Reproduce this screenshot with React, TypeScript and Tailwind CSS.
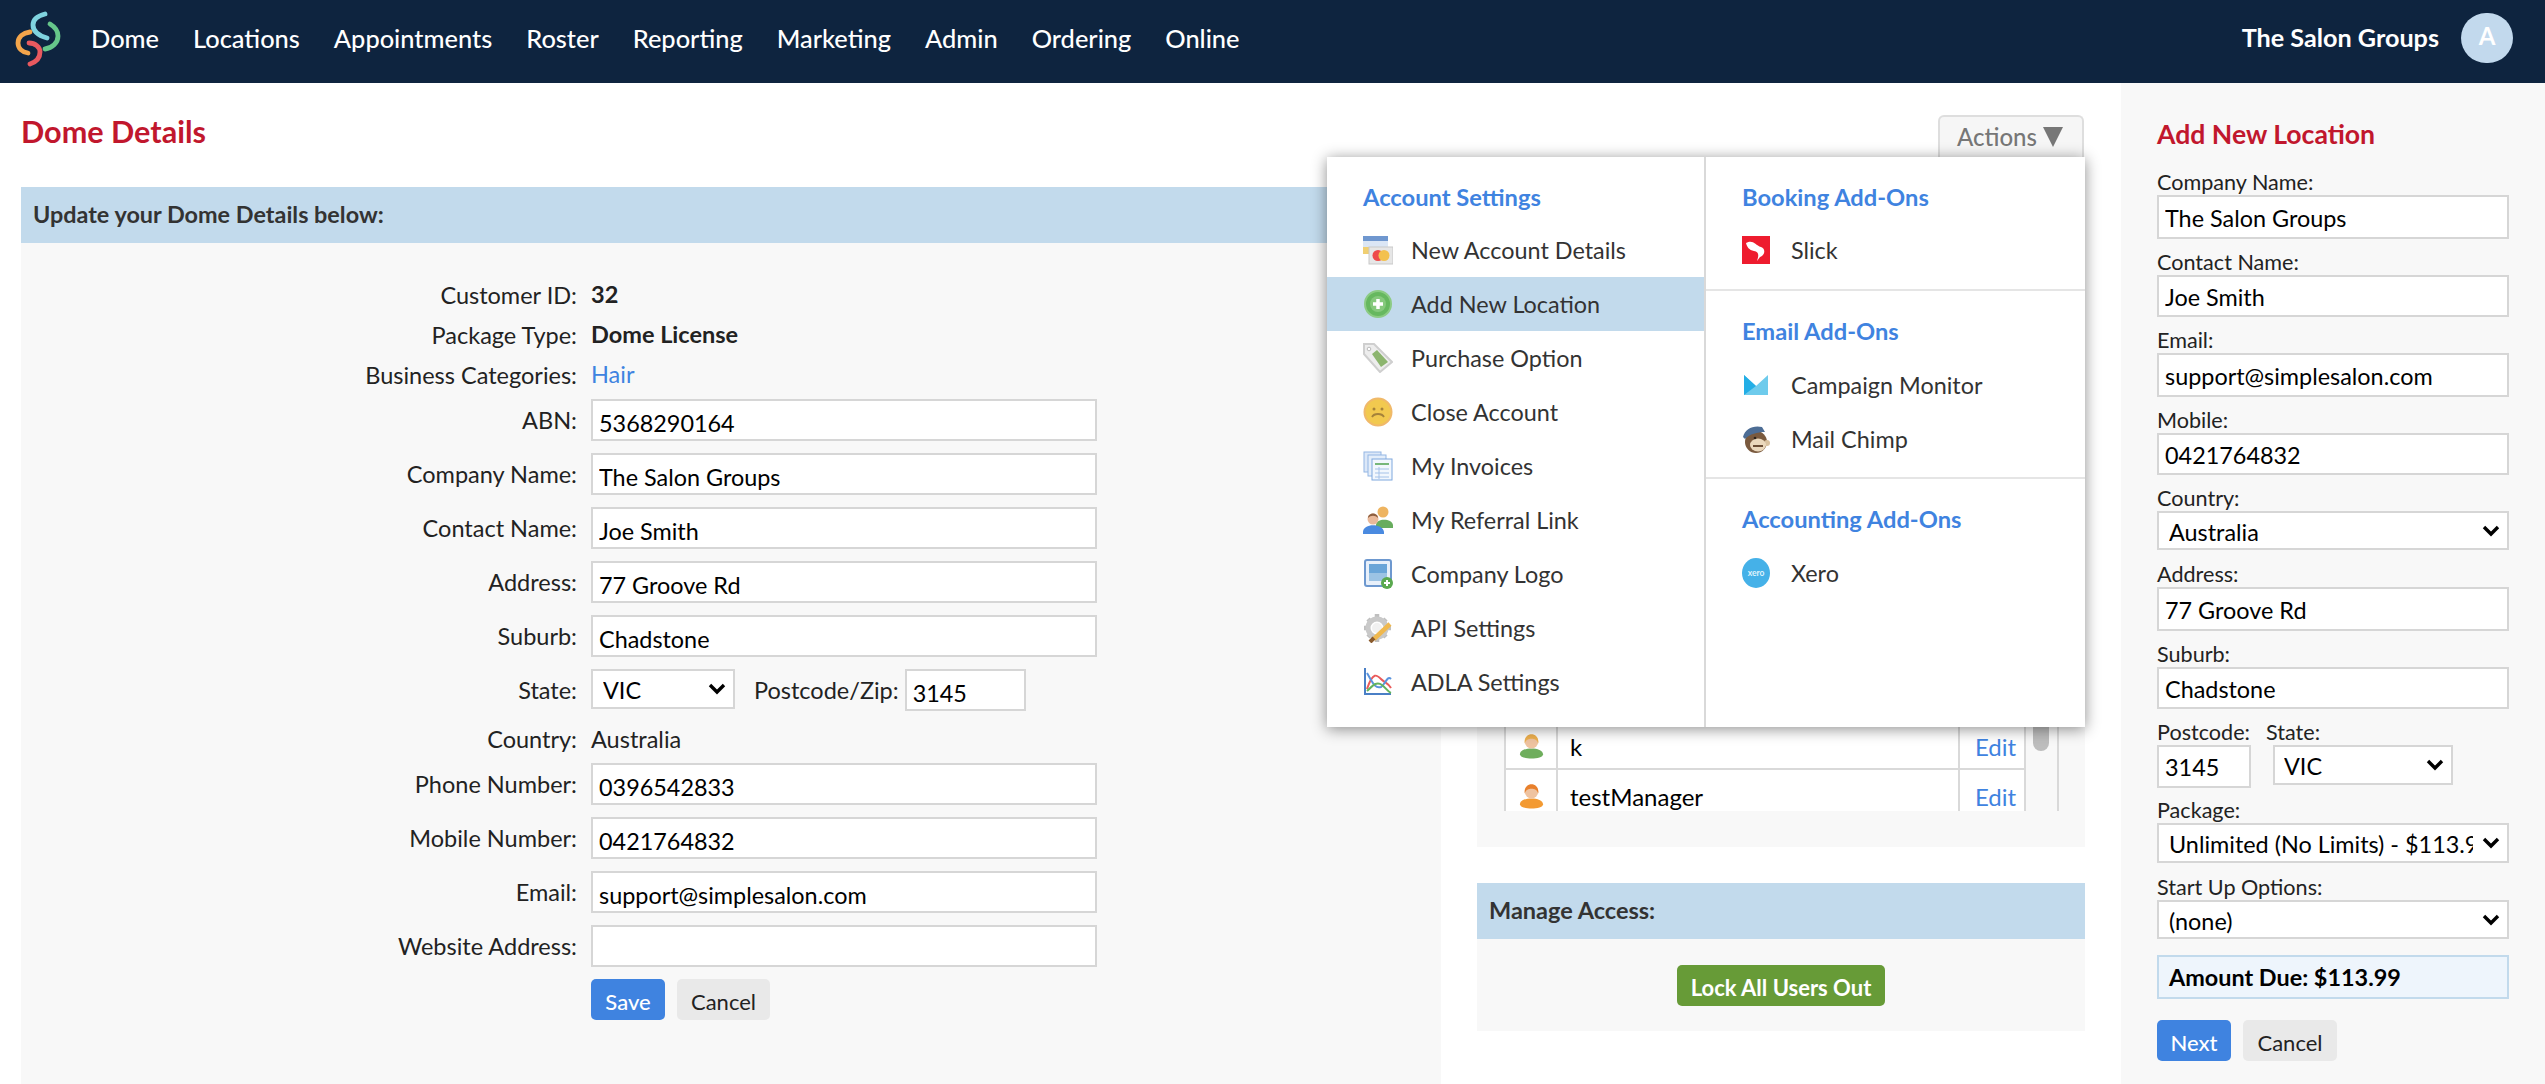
import type { ReactNode } from "react";

const navItems = ["Dome", "Locations", "Appointments", "Roster", "Reporting", "Marketing", "Admin", "Ordering", "Online"];

function Logo() {
  return (
    <svg viewBox="0 0 50 58" className="w-[50px] h-[58px] shrink-0" fill="none" strokeLinecap="round" strokeWidth="4.8">
      <path d="M31 5 C23 7 19 11 19 16 C19 23 26 27 33 29" stroke="#7fd3df" />
      <path d="M36 15 C41 18 44 22 44 27 C44 34 38 39 31 40" stroke="#66c68a" />
      <path d="M16 23 C9 24 4 28 4 34 C4 39 8 43 14 44" stroke="#f3a54b" />
      <path d="M15 34 C21 34 26 38 26 43 C26 49 22 53 16 55" stroke="#e8595f" />
    </svg>
  );
}

function CardIcon() {
  return (
    <svg viewBox="0 0 30 30" className="w-[30px] h-[30px]">
      <rect x="0" y="1" width="25" height="18" fill="#dbe6f5" />
      <rect x="0" y="1" width="25" height="5" fill="#6f97cf" />
      <rect x="0" y="12" width="6" height="7" fill="#f0cf72" />
      <rect x="6" y="12" width="24" height="17" fill="#e6e6e6" stroke="#c9c9c9" />
      <circle cx="15" cy="20.5" r="5.5" fill="#ee4a4a" />
      <circle cx="21" cy="20.5" r="5.5" fill="#f3c14f" />
    </svg>
  );
}

function AddIcon() {
  return (
    <svg viewBox="0 0 30 30" className="w-[30px] h-[30px]">
      <circle cx="15" cy="15" r="13" fill="#66b85f" stroke="#8ccb84" strokeWidth="2" />
      <circle cx="15" cy="15" r="8" fill="#86c97d" />
      <path d="M15 10 V20 M10 15 H20" stroke="#fff" strokeWidth="3.5" />
    </svg>
  );
}

function TagIcon() {
  return (
    <svg viewBox="0 0 30 30" className="w-[30px] h-[30px]">
      <path d="M1 1 H11 L29 19 L17 29 L1 11 Z" fill="#ededed" stroke="#cfcfcf" strokeWidth="2" />
      <path d="M9 11 L14 7 L25 19 L18 24 Z" fill="#8cb56e" />
      <circle cx="6" cy="6" r="1.8" fill="#fff" stroke="#bbb" />
    </svg>
  );
}

function SadIcon() {
  return (
    <svg viewBox="0 0 30 30" className="w-[30px] h-[30px]" fill="none">
      <circle cx="15" cy="15" r="13.5" fill="#f2c94f" stroke="#f0b96a" strokeWidth="2" />
      <circle cx="11" cy="12" r="1.5" fill="#a5823a" />
      <circle cx="19" cy="12" r="1.5" fill="#a5823a" />
      <path d="M9 20 C11 16 19 16 21 20" stroke="#a5823a" strokeWidth="1.8" />
    </svg>
  );
}

function InvoiceIcon() {
  return (
    <svg viewBox="0 0 30 30" className="w-[30px] h-[30px]">
      <rect x="1" y="1" width="17" height="20" fill="#dce8f8" stroke="#93b6e4" />
      <rect x="5" y="4" width="18" height="21" fill="#e4eefa" stroke="#93b6e4" />
      <rect x="9" y="8" width="20" height="21" fill="#f2f7fd" stroke="#7fa8de" />
      <path d="M12 13 H26" stroke="#77b77a" strokeWidth="2" />
      <path d="M12 18 H26 M12 22 H26 M12 26 H26 M16 16 V28" stroke="#a5c2e8" />
    </svg>
  );
}

function ReferralIcon() {
  return (
    <svg viewBox="0 0 30 30" className="w-[30px] h-[30px]">
      <circle cx="20" cy="7" r="5.5" fill="#eeb460" />
      <path d="M13 20 C13 13 29 13 30 20 V23 H13 Z" fill="#68ad5e" />
      <circle cx="10" cy="14" r="5.5" fill="#e9b99a" />
      <path d="M5 13 C5 7 15 7 15 13 C12 10 8 10 5 13 Z" fill="#8e5f3f" />
      <path d="M0 27 C0 18 20 18 21 27 V29 H0 Z" fill="#4a8ae0" />
    </svg>
  );
}

function LogoIcon() {
  return (
    <svg viewBox="0 0 30 30" className="w-[30px] h-[30px]">
      <rect x="2" y="1" width="26" height="26" rx="2" fill="#e8f0fa" stroke="#6d98cf" strokeWidth="2" />
      <rect x="6" y="5" width="18" height="17" fill="#6aa5d8" />
      <rect x="6" y="14" width="18" height="8" fill="#9cc3e4" />
      <circle cx="24" cy="24" r="6" fill="#5aa94f" />
      <path d="M24 21 V27 M21 24 H27" stroke="#fff" strokeWidth="2" />
    </svg>
  );
}

function GearIcon() {
  return (
    <svg viewBox="0 0 30 30" className="w-[30px] h-[30px]" fill="none">
      <path d="M14 1 V7 M14 23 V29 M1 15 H7 M21 15 H28 M5 6 L9 10 M23 6 L19 10 M5 24 L9 20 M23 24 L19 20" stroke="#bfbfbf" strokeWidth="4.5" />
      <circle cx="14" cy="15" r="9" stroke="#c9c9c9" strokeWidth="5" />
      <circle cx="14" cy="15" r="5" fill="#f1f1f1" />
      <path d="M11 26 L27 11" stroke="#efb84e" strokeWidth="4.5" />
      <path d="M7 29 L11 25" stroke="#8a5a2c" strokeWidth="4" />
    </svg>
  );
}

function ChartIcon() {
  return (
    <svg viewBox="0 0 30 30" className="w-[30px] h-[30px]" fill="none">
      <path d="M2 1 V27 H28" stroke="#4a7fc6" strokeWidth="2" />
      <path d="M4 22 C10 4 14 8 18 12 C22 16 25 16 28 21" stroke="#ea5a5a" strokeWidth="2" />
      <path d="M4 6 C10 16 12 22 18 20 C22 18 24 8 28 12" stroke="#5a93dd" strokeWidth="2" />
      <path d="M4 24 C10 18 14 14 19 18 C23 21 25 25 28 26" stroke="#63b35e" strokeWidth="2" />
    </svg>
  );
}

function SlickIcon() {
  return (
    <svg viewBox="0 0 28 28" className="w-[28px] h-[28px]" fill="none">
      <rect width="28" height="28" fill="#ee1c2e" />
      <path d="M4 7 C11 3 13 9 19 11 C24 13 23 19 18 21 L15 25 C17 19 17 16 12 15 C7 14 5 11 4 7 Z" fill="#fff" />
    </svg>
  );
}

function CampaignIcon() {
  return (
    <svg viewBox="0 0 28 28" className="w-[28px] h-[28px]">
      <path d="M2 4 L14 15 L26 4 V24 H2 Z" fill="#6ecbec" />
      <path d="M2 4 L14 15 L2 24 Z" fill="#23aee6" />
    </svg>
  );
}

function ChimpIcon() {
  return (
    <svg viewBox="0 0 28 28" className="w-[28px] h-[28px]">
      <ellipse cx="14" cy="17" rx="11" ry="11" fill="#7a5a3e" />
      <circle cx="25" cy="18" r="3" fill="#d9c2a0" />
      <ellipse cx="16" cy="20" rx="8" ry="6.5" fill="#ead8bc" />
      <circle cx="13" cy="13" r="1.3" fill="#2b2118" />
      <path d="M1 12 C3 4 11 0 20 2 L23 7 C15 7 8 9 3 14 Z" fill="#4d6d95" />
      <path d="M11 21 H21" stroke="#6a4d35" strokeWidth="2" />
    </svg>
  );
}

function XeroIcon() {
  return (
    <svg viewBox="0 0 28 30" className="w-[28px] h-[30px]">
      <ellipse cx="14" cy="15" rx="14" ry="15" fill="#45b1e8" />
      <text x="14" y="18" textAnchor="middle" fontSize="8.5" fill="#dff3fc" fontFamily="Lato, sans-serif" fontWeight="700">xero</text>
    </svg>
  );
}

function PersonIcon({ hair, body }: { hair: string; body: string }) {
  return (
    <svg viewBox="0 0 28 26" className="w-[27px] h-[25px]">
      <path d="M2 21 C2 13 26 13 26 21 C26 27 2 27 2 21 Z" fill={body} />
      <circle cx="14" cy="8" r="7" fill="#efc3a0" />
      <path d="M7 10 C5 -3 23 -3 21 10 C20 6 17 5 14 5 C11 5 8 6 7 10 Z" fill={hair} />
    </svg>
  );
}

function MenuRow({ icon, label, active }: { icon: ReactNode; label: string; active?: boolean }) {
  return (
    <div className={`flex h-[54px] items-center pl-[36px] text-[23.4px] text-[#333] ${active ? "bg-[#c2daec]" : ""}`}>
      {icon}
      <span className="ml-[18px] pt-[2px]">{label}</span>
    </div>
  );
}

function AddonRow({ icon, label }: { icon: ReactNode; label: string }) {
  return (
    <div className="flex h-[54px] items-center pl-[36px] text-[23.4px] text-[#333]">
      {icon}
      <span className="ml-[21px] pt-[2px]">{label}</span>
    </div>
  );
}

function MenuHeading({ children, className }: { children: ReactNode; className: string }) {
  return <div className={`flex items-center text-[23.7px] font-bold text-[#3f83e0] ${className}`}>{children}</div>;
}

function ActionsMenu() {
  return (
    <div className="absolute left-[-150px] top-[74px] z-10 flex h-[570px] w-[758px] bg-white shadow-[0_2px_14px_rgba(0,0,0,0.45)]">
      <div className="w-[379px] shrink-0 border-r-2 border-[#d9d9d9]">
        <MenuHeading className="h-[66px] pl-[36px] pt-[15px]">Account Settings</MenuHeading>
        <MenuRow icon={<CardIcon />} label="New Account Details" />
        <MenuRow icon={<AddIcon />} label="Add New Location" active />
        <MenuRow icon={<TagIcon />} label="Purchase Option" />
        <MenuRow icon={<SadIcon />} label="Close Account" />
        <MenuRow icon={<InvoiceIcon />} label="My Invoices" />
        <MenuRow icon={<ReferralIcon />} label="My Referral Link" />
        <MenuRow icon={<LogoIcon />} label="Company Logo" />
        <MenuRow icon={<GearIcon />} label="API Settings" />
        <MenuRow icon={<ChartIcon />} label="ADLA Settings" />
      </div>
      <div className="flex-1">
        <MenuHeading className="h-[66px] pl-[36px] pt-[15px]">Booking Add-Ons</MenuHeading>
        <AddonRow icon={<SlickIcon />} label="Slick" />
        <div className="mt-[12px] border-t-2 border-[#e5e5e5]" />
        <MenuHeading className="h-[67px] pl-[36px] pt-[14px]">Email Add-Ons</MenuHeading>
        <AddonRow icon={<CampaignIcon />} label="Campaign Monitor" />
        <AddonRow icon={<ChimpIcon />} label="Mail Chimp" />
        <div className="mt-[11px] border-t-2 border-[#e5e5e5]" />
        <MenuHeading className="h-[67px] pl-[36px] pt-[14px]">Accounting Add-Ons</MenuHeading>
        <AddonRow icon={<XeroIcon />} label="Xero" />
      </div>
    </div>
  );
}

function Chevron({ className }: { className: string }) {
  return (
    <svg viewBox="0 0 18 12" fill="none" className={`pointer-events-none absolute h-[12px] w-[18px] ${className}`}>
      <path d="M2 2 L9 9 L16 2" stroke="#000" strokeWidth="3.4" />
    </svg>
  );
}

function TextBox({ value, className }: { value: string; className: string }) {
  return (
    <input
      readOnly
      value={value}
      className={`border-2 border-[#d6d6d6] bg-white px-[6px] text-[23.4px] text-black outline-none ${className}`}
    />
  );
}

function SelectBox({ value, className, pad }: { value: string; className: string; pad: string }) {
  return (
    <div className={`relative ${className}`}>
      <select
        value={value}
        onChange={() => undefined}
        className={`h-full w-full appearance-none border-2 border-[#d6d6d6] bg-white pr-[34px] pt-[2px] text-[23.4px] text-black outline-none ${pad}`}
      >
        <option>{value}</option>
      </select>
      <Chevron className="right-[9px] top-1/2 -translate-y-1/2" />
    </div>
  );
}

function Button({ children, className }: { children: ReactNode; className: string }) {
  return (
    <button type="button" className={`flex h-[41px] items-center justify-center rounded-[5px] pt-[3px] text-[22px] ${className}`}>
      {children}
    </button>
  );
}

function FormRow({ label, className, children }: { label: string; className: string; children: ReactNode }) {
  return (
    <div className={`flex items-center ${className}`}>
      <div className="w-[556px] shrink-0 pt-[2px] text-right">{label}</div>
      <div className="ml-[14px] flex items-center">{children}</div>
    </div>
  );
}

function DomeDetails() {
  const rowBox = "h-[42px] w-[506px] pt-[5px]";
  return (
    <div className="ml-[21px] flex w-[1420px] shrink-0 flex-col">
      <h1 className="flex h-[104px] items-center pb-[6px] text-[30.6px] font-bold text-[#c1172d]">Dome Details</h1>
      <div className="flex h-[56px] items-center bg-[#c2daec] pl-[12px] text-[23.4px] font-bold text-[#333]">
        Update your Dome Details below:
      </div>
      <div className="flex-1 bg-[#f8f8f8] pt-[32px] text-[23.5px] text-[#222]">
        <FormRow label="Customer ID:" className="h-[40px]"><b>32</b></FormRow>
        <FormRow label="Package Type:" className="h-[40px]"><b>Dome License</b></FormRow>
        <FormRow label="Business Categories:" className="h-[40px]"><span className="text-[#3f83e0]">Hair</span></FormRow>
        <FormRow label="ABN:" className="mt-[4px] h-[42px]"><TextBox value="5368290164" className={rowBox} /></FormRow>
        <FormRow label="Company Name:" className="mt-[12px] h-[42px]"><TextBox value="The Salon Groups" className={rowBox} /></FormRow>
        <FormRow label="Contact Name:" className="mt-[12px] h-[42px]"><TextBox value="Joe Smith" className={rowBox} /></FormRow>
        <FormRow label="Address:" className="mt-[12px] h-[42px]"><TextBox value="77 Groove Rd" className={rowBox} /></FormRow>
        <FormRow label="Suburb:" className="mt-[12px] h-[42px]"><TextBox value="Chadstone" className={rowBox} /></FormRow>
        <FormRow label="State:" className="mt-[12px] h-[42px]">
          <SelectBox value="VIC" className="h-[40px] w-[144px] self-start" pad="pl-[10px]" />
          <span className="ml-[19px] mr-[6px] pt-[2px]">Postcode/Zip:</span>
          <TextBox value="3145" className="h-[42px] w-[121px] pt-[5px]" />
        </FormRow>
        <FormRow label="Country:" className="mt-[8px] h-[40px]"><span className="pt-[2px]">Australia</span></FormRow>
        <FormRow label="Phone Number:" className="mt-[4px] h-[42px]"><TextBox value="0396542833" className={rowBox} /></FormRow>
        <FormRow label="Mobile Number:" className="mt-[12px] h-[42px]"><TextBox value="0421764832" className={rowBox} /></FormRow>
        <FormRow label="Email:" className="mt-[12px] h-[42px]"><TextBox value="support@simplesalon.com" className={rowBox} /></FormRow>
        <FormRow label="Website Address:" className="mt-[12px] h-[42px]"><TextBox value="" className={rowBox} /></FormRow>
        <div className="ml-[570px] mt-[12px] flex gap-[12px]">
          <Button className="w-[74px] bg-[#3f83e0] font-medium text-white">Save</Button>
          <Button className="w-[93px] bg-[#e9e9e9] text-[#222]">Cancel</Button>
        </div>
      </div>
    </div>
  );
}

function UserRow({ name, hair, body }: { name: string; hair: string; body: string }) {
  return (
    <div className="flex h-[50px] border-b-2 border-[#d9d9d9] bg-white text-[24px] text-black">
      <div className="flex w-[54px] shrink-0 items-center justify-center border-x-2 border-[#d9d9d9] pt-[4px]">
        <PersonIcon hair={hair} body={body} />
      </div>
      <div className="flex flex-1 items-center border-r-2 border-[#d9d9d9] pl-[12px] pt-[6px]">{name}</div>
      <div className="flex w-[66px] shrink-0 items-center border-r-2 border-[#d9d9d9] pl-[15px] pt-[6px] text-[#3f83e0]">Edit</div>
    </div>
  );
}

function MiddleColumn() {
  return (
    <div className="relative ml-[36px] flex w-[608px] shrink-0 flex-col">
      <div className="flex h-[104px] justify-end pt-[32px]">
        <div className="mr-[1px] flex h-[42px] w-[146px] items-center justify-center gap-[6px] rounded-t-[6px] border-2 border-b-0 border-[#dedede] bg-[#f6f6f6] pr-[2px] text-[24px] font-medium text-[#777]">
          Actions
          <span className="h-0 w-0 border-x-[10px] border-t-[20px] border-x-transparent border-t-[#777]" />
        </div>
      </div>
      <ActionsMenu />
      <div className="flex h-[660px] flex-col justify-end bg-[#f8f8f8] pb-[36px] pl-[27px] pr-[26px]">
        <div className="relative h-[91px] overflow-hidden border-r-2 border-[#d9d9d9] pr-[31px]">
          <UserRow name="k" hair="#eeb04e" body="#6fae5d" />
          <UserRow name="testManager" hair="#e8802c" body="#f39a32" />
          <div className="absolute right-[8px] top-0 h-[31px] w-[16px] rounded-b-full bg-[#bdbdbd]" />
        </div>
      </div>
      <div className="mt-[36px] flex h-[56px] items-center bg-[#c2daec] pl-[12px] text-[23.5px] font-bold text-[#333]">
        Manage Access:
      </div>
      <div className="flex h-[92px] justify-center bg-[#f8f8f8] pt-[26px]">
        <Button className="h-[40px] w-[208px] bg-[#679b37] text-[21.8px] font-bold text-white">Lock All Users Out</Button>
      </div>
    </div>
  );
}

function SideField({ label, className, children }: { label: string; className?: string; children: ReactNode }) {
  return (
    <div className={className}>
      <div className="h-[25px] text-[21.6px] leading-[24px] text-[#222]">{label}</div>
      {children}
    </div>
  );
}

function AddLocation() {
  return (
    <div className="ml-[36px] flex-1 bg-[#f8f8f8] px-[36px] pt-[35px]">
      <h2 className="flex h-[34px] items-center text-[26.6px] font-bold text-[#c1172d]">Add New Location</h2>
      <div className="mt-[18px] flex flex-col gap-[11px]">
        <SideField label="Company Name:"><TextBox value="The Salon Groups" className="h-[44px] w-full pt-[1px]" /></SideField>
        <SideField label="Contact Name:"><TextBox value="Joe Smith" className="h-[42px] w-full pt-[1px]" /></SideField>
        <SideField label="Email:"><TextBox value="support@simplesalon.com" className="h-[44px] w-full pt-[1px]" /></SideField>
        <SideField label="Mobile:"><TextBox value="0421764832" className="h-[42px] w-full pt-[1px]" /></SideField>
        <SideField label="Country:"><SelectBox value="Australia" className="h-[39px] w-full" pad="pl-[10px]" /></SideField>
        <SideField label="Address:" className="mt-[1px]"><TextBox value="77 Groove Rd" className="h-[44px] w-full pt-[1px]" /></SideField>
        <SideField label="Suburb:"><TextBox value="Chadstone" className="h-[42px] w-full pt-[1px]" /></SideField>
        <div className="flex h-[68px] items-start">
          <SideField label="Postcode:"><TextBox value="3145" className="h-[43px] w-[94px] pt-[1px]" /></SideField>
          <SideField label="State:" className="ml-[15px]"><SelectBox value="VIC" className="ml-[7px] h-[40px] w-[180px]" pad="pl-[9px]" /></SideField>
        </div>
        <SideField label="Package:" className="mt-[-1px]"><SelectBox value="Unlimited (No Limits) - $113.99" className="h-[40px] w-full" pad="pl-[10px]" /></SideField>
        <SideField label="Start Up Options:" className="mt-[1px]"><SelectBox value="(none)" className="h-[39px] w-full" pad="pl-[10px]" /></SideField>
      </div>
      <div className="mt-[16px] flex h-[44px] items-center border-2 border-[#c2daec] bg-[#eef5fc] pl-[10px] pt-[1px] text-[23.4px] font-bold text-black">
        Amount Due: $113.99
      </div>
      <div className="mt-[21px] flex gap-[12px]">
        <Button className="w-[74px] bg-[#3f83e0] font-medium text-white">Next</Button>
        <Button className="w-[94px] bg-[#e9e9e9] text-[#222]">Cancel</Button>
      </div>
    </div>
  );
}

export default function App() {
  return (
    <div className="flex h-[1084px] w-[2545px] flex-col overflow-hidden bg-white font-[family-name:Lato,sans-serif]">
      <nav className="flex h-[83px] shrink-0 items-center bg-[#0e243f] pb-[7px] text-white">
        <div className="ml-[14px]"><Logo /></div>
        <div className="ml-[27px] flex gap-[34px] text-[25.4px] font-medium">
          {navItems.map((item) => (
            <span key={item}>{item}</span>
          ))}
        </div>
        <div className="ml-auto text-[25.2px] font-bold">The Salon Groups</div>
        <div className="ml-[22px] mr-[32px] flex h-[50px] w-[52px] items-center justify-center rounded-full bg-[#c2d9ed] pb-[4px] text-[24px] font-bold">A</div>
      </nav>
      <div className="flex flex-1">
        <DomeDetails />
        <MiddleColumn />
        <AddLocation />
      </div>
    </div>
  );
}
